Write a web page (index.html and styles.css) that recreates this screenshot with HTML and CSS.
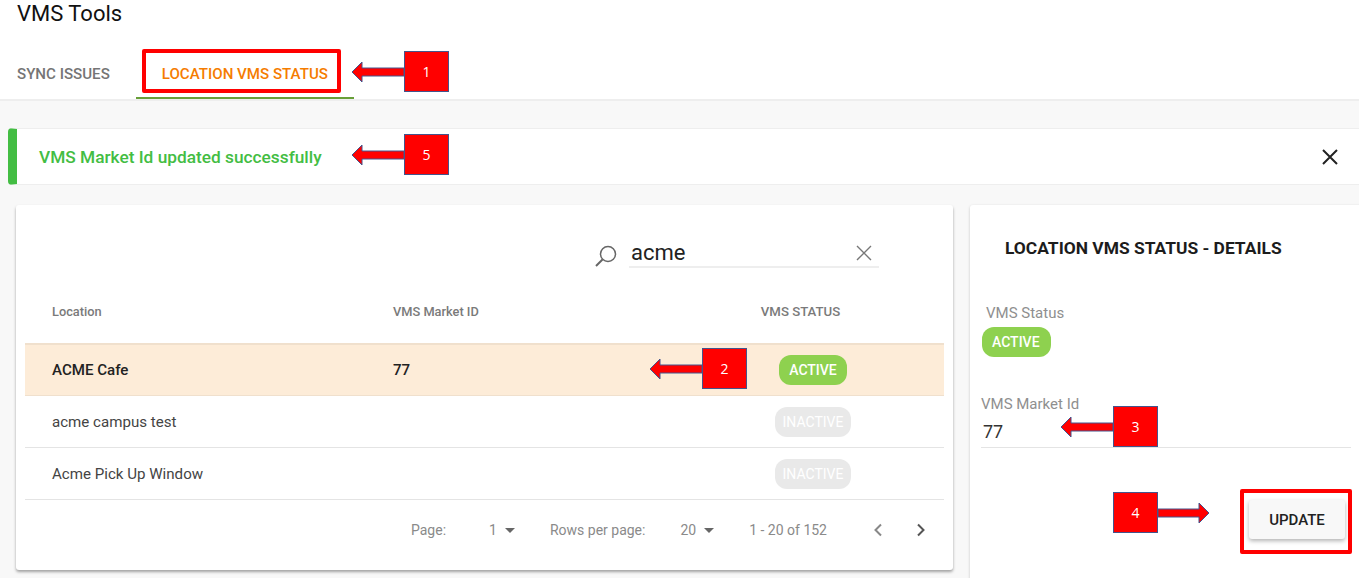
FILE: index.html
```html
<!DOCTYPE html>
<html lang="en">
<head>
    <meta charset="UTF-8">
    <title>VMS Tools</title>
    <link rel="stylesheet" href="styles.css">
</head>
<body>
    <header class="top">
        <h1>VMS Tools</h1>
        <nav class="tabs">
            <a class="tab">SYNC ISSUES</a>
            <a class="tab tab-active">LOCATION VMS STATUS</a>
        </nav>
    </header>

    <div class="alert">
        <span class="alert-text">VMS Market Id updated successfully</span>
        <svg class="alert-close" width="18" height="18" viewBox="0 0 18 18"><path d="M2 2 L16 16 M16 2 L2 16" stroke="#222" stroke-width="2" fill="none"/></svg>
    </div>

    <main class="content">
        <section class="card list-card">
            <div class="search">
                <svg class="search-icon" width="24" height="24" viewBox="0 0 24 24"><circle cx="14" cy="10" r="7.5" stroke="#666" stroke-width="1.5" fill="none"/><path d="M8.5 15.5 L2 22" stroke="#666" stroke-width="2" fill="none"/></svg>
                <div class="search-box">
                    <span class="search-value">acme</span>
                    <svg width="16" height="16" viewBox="0 0 16 16"><path d="M1 1 L15 15 M15 1 L1 15" stroke="#777" stroke-width="1.4" fill="none"/></svg>
                </div>
            </div>

            <div class="row row-head">
                <div class="col-loc">Location</div>
                <div class="col-id">VMS Market ID</div>
                <div class="col-status">VMS STATUS</div>
            </div>
            <div class="row row-selected">
                <div class="col-loc">ACME Cafe</div>
                <div class="col-id">77</div>
                <div class="col-status"><span class="pill pill-active">ACTIVE</span></div>
            </div>
            <div class="row">
                <div class="col-loc">acme campus test</div>
                <div class="col-id"></div>
                <div class="col-status"><span class="pill pill-inactive">INACTIVE</span></div>
            </div>
            <div class="row">
                <div class="col-loc">Acme Pick Up Window</div>
                <div class="col-id"></div>
                <div class="col-status"><span class="pill pill-inactive">INACTIVE</span></div>
            </div>

            <div class="pager">
                <span class="pager-label">Page:</span>
                <span class="pager-select pager-select-page">1<i class="caret"></i></span>
                <span class="pager-label">Rows per page:</span>
                <span class="pager-select pager-select-rows">20<i class="caret"></i></span>
                <span class="pager-label pager-range">1 - 20 of 152</span>
                <svg class="pager-prev" width="10" height="14" viewBox="0 0 10 14"><path d="M8 1.5 L2.5 7 L8 12.5" stroke="#888" stroke-width="2" fill="none"/></svg>
                <svg class="pager-next" width="10" height="14" viewBox="0 0 10 14"><path d="M2 1.5 L7.5 7 L2 12.5" stroke="#555" stroke-width="2" fill="none"/></svg>
            </div>
        </section>

        <aside class="card detail-card">
            <h2>LOCATION VMS STATUS - DETAILS</h2>
            <div class="field-label status-label">VMS Status</div>
            <span class="pill pill-active detail-pill">ACTIVE</span>
            <div class="field-label market-label">VMS Market Id</div>
            <div class="field-value">77</div>
            <div class="detail-actions">
                <button class="update-btn">UPDATE</button>
            </div>
        </aside>
    </main>

    <!-- screenshot annotations -->
    <div class="mark mark-tab"></div>
    <div class="mark mark-update"></div>

    <div class="note note-left note-1"><svg width="53" height="22" viewBox="0 0 53 22"><path d="M1 11 L11 1 L11 7 L53 7 L53 15 L11 15 L11 21 Z" fill="#f00" stroke="#44548c" stroke-width="1"/></svg><span class="note-box">1</span></div>
    <div class="note note-left note-5"><svg width="53" height="22" viewBox="0 0 53 22"><path d="M1 11 L11 1 L11 7 L53 7 L53 15 L11 15 L11 21 Z" fill="#f00" stroke="#44548c" stroke-width="1"/></svg><span class="note-box">5</span></div>
    <div class="note note-left note-2"><svg width="53" height="22" viewBox="0 0 53 22"><path d="M1 11 L11 1 L11 7 L53 7 L53 15 L11 15 L11 21 Z" fill="#f00" stroke="#44548c" stroke-width="1"/></svg><span class="note-box">2</span></div>
    <div class="note note-left note-3"><svg width="53" height="22" viewBox="0 0 53 22"><path d="M1 11 L11 1 L11 7 L53 7 L53 15 L11 15 L11 21 Z" fill="#f00" stroke="#44548c" stroke-width="1"/></svg><span class="note-box">3</span></div>
    <div class="note note-4"><span class="note-box">4</span><svg width="52" height="22" viewBox="0 0 52 22"><path d="M51 11 L41 1 L41 7 L0 7 L0 15 L41 15 L41 21 Z" fill="#f00" stroke="#44548c" stroke-width="1"/></svg></div>
</body>
</html>
```

FILE: styles.css
```css
html {
    background-color: #fff;
}
html, body {
    margin: 0;
    padding: 0;
    overflow: hidden;
}
body {
    height: 578px;
    font-family: Roboto, "Liberation Sans", sans-serif;
    background-color: #f8f8f8;
    color: #333;
    position: relative;
}
.top {
    background-color: #fff;
    height: 99px;
    border-bottom: 2px solid #eee;
    padding-left: 17px;
}
.top h1 {
    margin: 0;
    padding-top: 1px;
    font-size: 22px;
    line-height: 26px;
    font-weight: 400;
    color: #111;
}
.tabs {
    display: flex;
    margin-top: 19px;
    height: 53px;
}
.tab {
    font-size: 15.1px;
    line-height: 56px;
    font-weight: 500;
    color: #757575;
    margin-right: 26px;
}
.tab-active {
    color: #f57c00;
    padding: 0 26px;
    margin: 0;
    width: 166px;
    height: 51px;
    border-bottom: 2px solid #689f38;
    white-space: nowrap;
}
.alert {
    display: flex;
    align-items: center;
    justify-content: space-between;
    box-sizing: border-box;
    height: 57px;
    margin: 27px 0 0 8px;
    padding: 0 20px 0 22px;
    background-color: #fff;
    border-left: 9px solid #43bd43;
    border-top: 1px solid #eee;
    border-bottom: 1px solid #eee;
    border-radius: 4px 0 0 4px;
}
.alert-text {
    font-size: 17.3px;
    font-weight: 500;
    color: #43bd43;
}
.content {
    display: flex;
    margin-top: 20px;
    padding-left: 16px;
    gap: 17px;
    align-items: flex-start;
}
.card {
    background-color: #fff;
    border-radius: 3px;
    box-sizing: border-box;
    flex-shrink: 0;
}
.list-card {
    width: 937px;
    height: 365px;
    padding: 0 9px;
    box-shadow: 0 2px 3px rgba(0, 0, 0, 0.35);
}
.search {
    display: flex;
    align-items: flex-end;
    justify-content: flex-end;
    padding: 31px 65px 0 0;
    height: 63px;
    box-sizing: border-box;
}
.search-icon {
    margin: 0 11px 0 0;
}
.search-box {
    display: flex;
    align-items: center;
    justify-content: space-between;
    width: 250px;
    height: 32px;
    box-sizing: border-box;
    padding: 3px 7px 0 2px;
    border-bottom: 2px solid #eee;
}
.search-value {
    font-size: 22px;
    color: #222;
}
.row {
    display: flex;
    align-items: center;
    height: 52px;
    box-sizing: border-box;
    border-bottom: 1px solid #e4e4e4;
    font-size: 15.1px;
    color: #444;
}
.row-head {
    height: 75px;
    padding-top: 12px;
    border-bottom: none;
    font-size: 12.8px;
    font-weight: 500;
    color: #7a7a7a;
}
.row-selected {
    height: 53px;
    background-color: #fdecd8;
    border-top: 2px solid #f0e0cd;
    border-bottom: 1px solid #f0e0cd;
    font-weight: 500;
    color: #222;
}
.col-loc {
    width: 368px;
    padding-left: 27px;
    box-sizing: border-box;
}
.col-id {
    width: 300px;
}
.col-status {
    width: 240px;
    text-align: center;
}
.row-head .col-status {
    font-size: 13.2px;
    padding-right: 25px;
    box-sizing: border-box;
}
.pill {
    display: inline-block;
    height: 30px;
    line-height: 30px;
    padding: 0 10px;
    border-radius: 12px;
    font-size: 14px;
    font-weight: 500;
    color: #fff;
}
.pill-active {
    background-color: #8ed14f;
}
.pill-inactive {
    background-color: #e9e9e9;
    font-weight: 400;
    padding: 0 8px;
}
.pager {
    display: flex;
    align-items: center;
    height: 60px;
    font-size: 14px;
    color: #8a8a8a;
}
.pager .pager-label:first-child {
    margin-left: 386px;
}
.pager-select {
    display: inline-flex;
    align-items: center;
}
.pager-select-page {
    margin: 0 35px 0 43px;
}
.pager-select-rows {
    margin: 0 35px;
}
.caret {
    display: inline-block;
    width: 0;
    height: 0;
    margin-left: 8px;
    border-left: 5px solid transparent;
    border-right: 5px solid transparent;
    border-top: 5px solid #666;
}
.pager-prev {
    margin-left: 46px;
}
.pager-next {
    margin-left: 33px;
}
.detail-card {
    width: 400px;
    height: 380px;
    box-shadow: 0 1px 3px rgba(0, 0, 0, 0.2);
    padding: 0 0 0 11px;
}
.detail-card h2 {
    margin: 0;
    padding: 35px 0 0 24px;
    font-size: 17.4px;
    line-height: 17px;
    font-weight: 700;
    color: #1c1c1c;
}
.field-label {
    font-size: 15px;
    color: #8f8f8f;
}
.status-label {
    margin: 47px 0 0 5px;
    line-height: 18px;
}
.detail-pill {
    display: block;
    width: 49px;
    margin-top: 5px;
    margin-left: 1px;
}
.market-label {
    margin-top: 38px;
    line-height: 18px;
}
.field-value {
    width: 370px;
    height: 34px;
    line-height: 36px;
    padding-left: 2px;
    box-sizing: border-box;
    font-size: 18px;
    color: #333;
    border-bottom: 1px solid #e4e4e4;
    margin-top: 1px;
}
.detail-actions {
    width: 364px;
    display: flex;
    justify-content: flex-end;
    margin-top: 52px;
}
.update-btn {
    width: 96px;
    height: 39px;
    font-family: inherit;
    font-size: 15px;
    font-weight: 500;
    color: #222;
    background-color: #f8f8f8;
    border: none;
    border-radius: 3px;
    box-shadow: 0 2px 4px rgba(0, 0, 0, 0.3);
}

/* red annotations over the screenshot */
.mark {
    position: absolute;
    box-sizing: border-box;
    border: 4px solid #f00;
    border-radius: 2px;
}
.mark-tab {
    left: 142px;
    top: 49px;
    width: 199px;
    height: 44px;
}
.mark-update {
    left: 1240px;
    top: 489px;
    width: 112px;
    height: 65px;
}
.note {
    position: absolute;
    display: flex;
    align-items: center;
    height: 41px;
}
.note-box {
    width: 45px;
    height: 41px;
    line-height: 39px;
    box-sizing: border-box;
    text-align: center;
    background-color: #f00;
    border: 1px solid #44548c;
    color: #fff;
    font-family: "Open Sans", sans-serif;
    font-size: 14px;
}
.note-1 { left: 351px; top: 51px; }
.note-5 { left: 351px; top: 134px; }
.note-2 { left: 649px; top: 348px; }
.note-3 { left: 1060px; top: 406px; }
.note-4 { left: 1113px; top: 492px; }
```
